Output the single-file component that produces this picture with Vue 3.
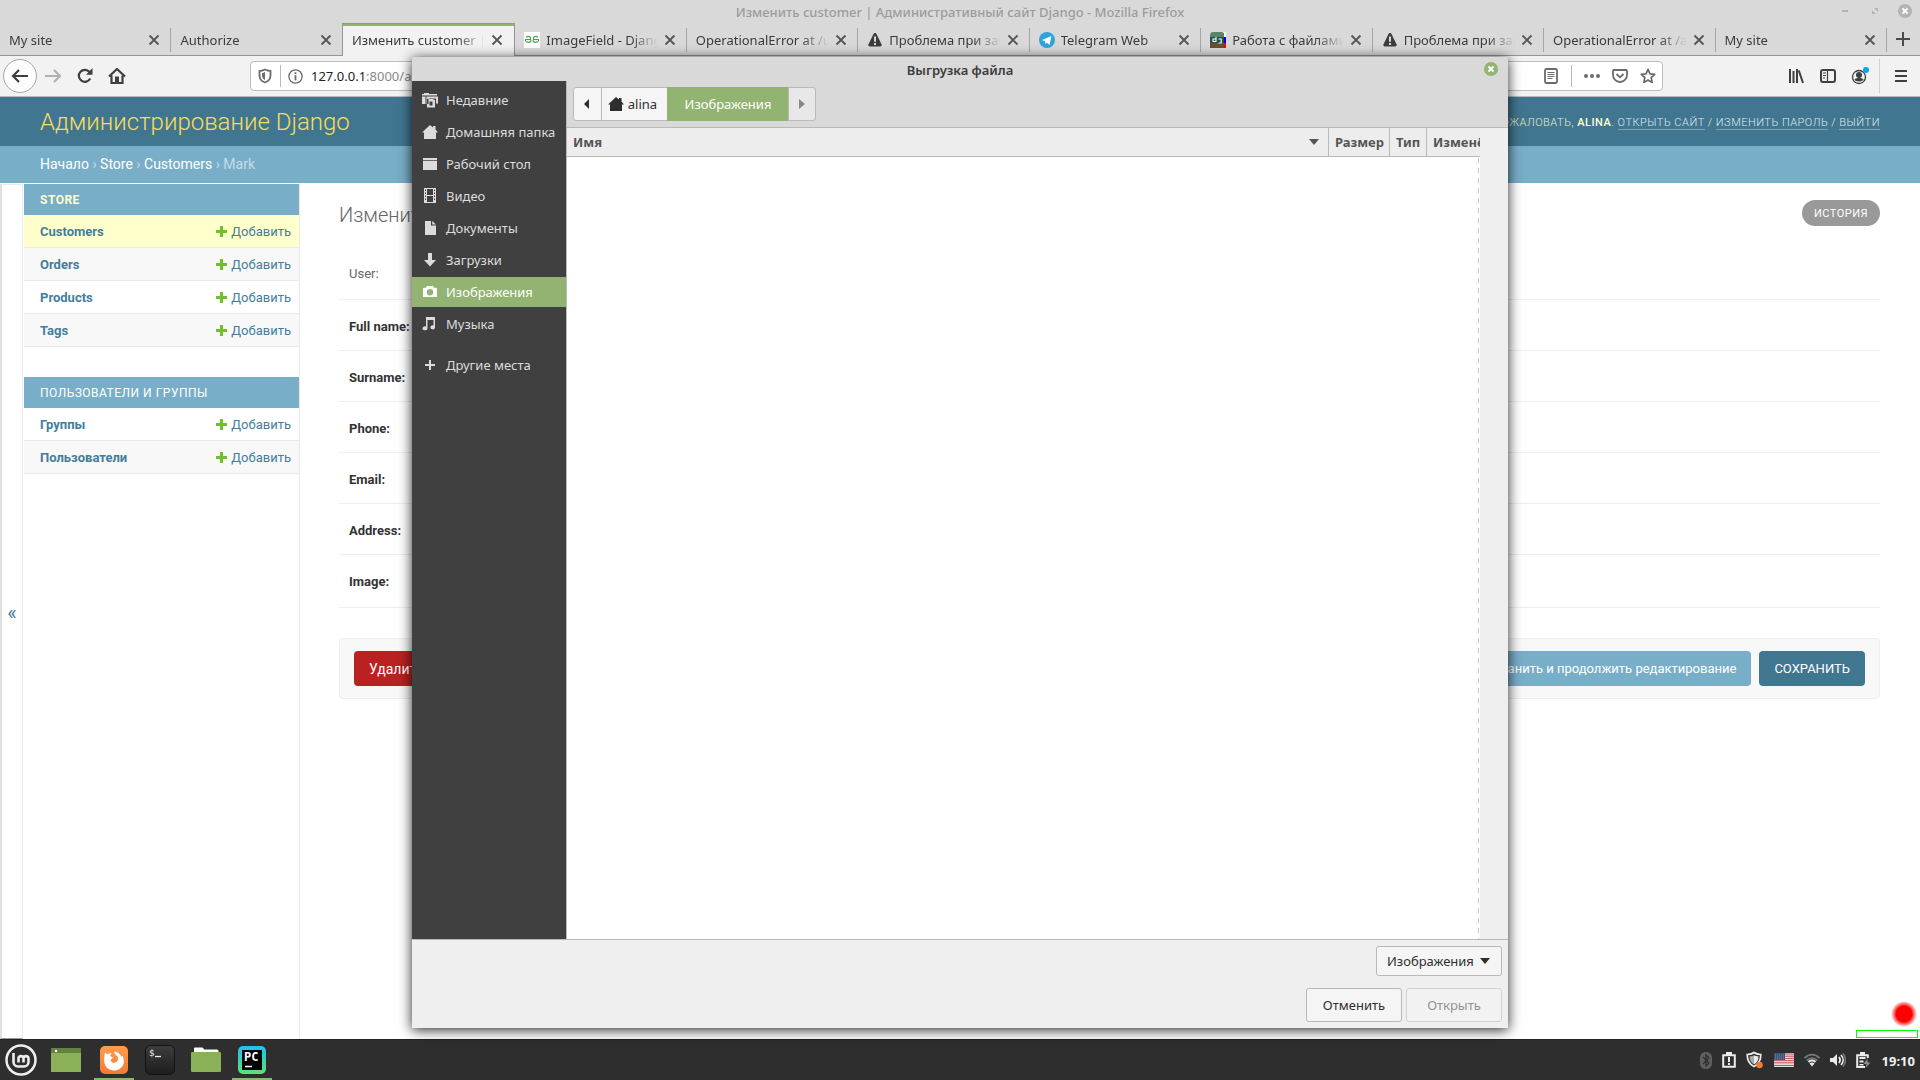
<script setup>
import { ref } from 'vue'

const tabs = [
  { title: 'My site' },
  { title: 'Authorize' },
  { title: 'Изменить customer | Административный сайт', active: true },
  { title: 'ImageField - Django Models', icon: 'geeks' },
  { title: 'OperationalError at /user/' },
  { title: 'Проблема при загрузке', icon: 'warn' },
  { title: 'Telegram Web', icon: 'telegram' },
  { title: 'Работа с файлами', icon: 'dj' },
  { title: 'Проблема при загрузке', icon: 'warn' },
  { title: 'OperationalError at /admin/' },
  { title: 'My site' },
]

const sections = [
  { title: 'STORE', current: true, models: ['Customers', 'Orders', 'Products', 'Tags'] },
  { title: 'Пользователи и группы', models: ['Группы', 'Пользователи'] },
]
const currentModel = 'Customers'

const fields = ['User', 'Full name', 'Surname', 'Phone', 'Email', 'Address', 'Image']

const places = [
  { name: 'Недавние', icon: 'recent' },
  { name: 'Домашняя папка', icon: 'home' },
  { name: 'Рабочий стол', icon: 'desktop' },
  { name: 'Видео', icon: 'video' },
  { name: 'Документы', icon: 'doc' },
  { name: 'Загрузки', icon: 'down' },
  { name: 'Изображения', icon: 'camera' },
  { name: 'Музыка', icon: 'music' },
  { name: 'Другие места', icon: 'plus' },
]
const place = ref('Изображения')
const filter = ref('Изображения')
const url = ref(':8000/admin/store/customer/1/change/')
</script>

<template>
  <div class="screen">
    <header class="titlebar">
      <span>Изменить customer | Административный сайт Django - Mozilla Firefox</span>
      <div class="wm">
        <button aria-label="Свернуть"><svg width="14" height="14"><path d="M4 7h6" stroke="#b4b4b4" stroke-width="2" /></svg></button>
        <button aria-label="Развернуть"><svg width="14" height="14"><path d="M6 4h4v4zM4 6v4h4z" fill="#b4b4b4" /></svg></button>
        <button aria-label="Закрыть"><svg width="14" height="14"><circle cx="7" cy="7" r="7" fill="#b4b4b4" /><path d="M4.500 4.500l5 5m0-5l-5 5" stroke="#fff" stroke-width="2" /></svg></button>
      </div>
    </header>

    <div class="tabs">
      <div v-for="(t, i) in tabs" :key="i" class="tab" :class="{ active: t.active }">
        <svg v-if="t.icon === 'geeks'" class="fav" width="16" height="16"><rect width="16" height="16" fill="#fff" /><path d="M1.800 5.200Q4.500 3.500 6.500 5.500V7.500H1M1.500 7.500v1.200Q3.500 11.500 6.800 9.500V7.500M14.200 5.200Q11.500 3.500 9.500 5.500V7.500H15M14.500 7.500v1.200Q12.500 11.500 9.200 9.500V7.500" fill="none" stroke="#4b9e57" stroke-width="1.100" /></svg>
        <svg v-else-if="t.icon === 'warn'" class="fav" width="16" height="16"><path d="M8 1c.8 0 1.200.5 1.500 1l5 10.300c.5 1.300-.2 2.200-1.300 2.200H2.800c-1.100 0-1.800-.9-1.300-2.200L6.500 2C6.800 1.500 7.200 1 8 1z" fill="#3d3d3d" /><path d="M7 4.500h2v5.200H7zM7 11h2v2H7z" fill="#d9d9d9" /></svg>
        <svg v-else-if="t.icon === 'telegram'" class="fav" width="16" height="16"><circle cx="8" cy="8" r="8" fill="#2fa3dc" /><path d="M3 8l9.500-4-2 9-2.600-2.200-1.400 1.500-.3-2.800z" fill="#fff" /></svg>
        <svg v-else-if="t.icon === 'dj'" class="fav" width="16" height="16"><path fill="#fff" d="M12 0h4v5h-4z" /><path fill="#00f" d="M12 5h4v6h-4z" /><path fill="#f00" d="M12 11h4v5h-4z" /><path fill="#5c8468" d="M2 0h10l2 1v4H0V2z" /><path fill="#24504f" d="M0 5h14v6H0z" /><path fill="#69502e" d="M0 11h14v5H0z" /><path d="M6 5v4.500H3V7H6M8.500 7h2.700v4H8.500" fill="none" stroke="#fff" stroke-width="1.100" /></svg>
        <span class="tab-title">{{ t.title }}</span>
        <button class="tab-x" aria-label="Закрыть вкладку"><svg width="12" height="12"><path d="M1.500 1.500l9 9m0-9l-9 9" stroke="#555" stroke-width="1.800" /></svg></button>
      </div>
      <button class="newtab" aria-label="Новая вкладка"><svg width="14" height="14"><path d="M7 0v14M0 7h14" stroke="#4a4a4a" stroke-width="2" /></svg></button>
    </div>

    <div class="toolbar">
      <button class="back" aria-label="Назад"><svg width="18" height="16"><path d="M17 8H2.500M8 2L2 8l6 6" fill="none" stroke="#3f3f3f" stroke-width="2.200" /></svg></button>
      <button class="tool" aria-label="Вперёд"><svg width="18" height="16"><path d="M1 8h14.500M10 2l6 6-6 6" fill="none" stroke="#b1b1b1" stroke-width="2.200" /></svg></button>
      <button class="tool" aria-label="Обновить"><svg width="16" height="16"><path d="M13.200 10.500A6 6 0 1 1 12.500 4" fill="none" stroke="#3f3f3f" stroke-width="2.200" /><path d="M15.500 0v6.800H9z" fill="#3f3f3f" /></svg></button>
      <button class="tool" aria-label="Домой"><svg width="18" height="16"><path d="M1 8.500L9 1l8 7.500M3.500 7.500V15h11V7.500" fill="none" stroke="#3f3f3f" stroke-width="2.200" /><path d="M7 8.500h4V15H7z" fill="#3f3f3f" /></svg></button>
      <div class="urlbar">
        <svg width="14" height="16"><path d="M7 1.500C5 2.500 3 3 1.500 3v4.500c0 3.500 2.500 6 5.500 7 3-1 5.500-3.500 5.500-7V3C11 3 9 2.500 7 1.500z" fill="none" stroke="#6b6b6b" stroke-width="1.800" /><path d="M7 4v8c-1.800-1-3-2.500-3-4.500V5c1 0 2-.5 3-1z" fill="#6b6b6b" /></svg>
        <i class="vline"></i>
        <svg width="15" height="15"><circle cx="7.500" cy="7.500" r="6.600" fill="none" stroke="#6b6b6b" stroke-width="1.300" /><path d="M6.600 3.300h1.800v1.800H6.600zM6.600 6.200h1.800V11.500H6.600z" fill="#6b6b6b" /></svg>
        <label class="addr"><span>127.0.0.1</span><input v-model="url" aria-label="Адрес" /></label>
        <svg width="14" height="16"><rect x="1" y="1" width="12" height="14" rx="1.500" fill="none" stroke="#6b6b6b" stroke-width="1.800" /><path d="M3.500 4.500h7M3.500 6.500h7M3.500 8.500h7M3.500 10.500h5" stroke="#6b6b6b" /></svg>
        <i class="vline page"></i>
        <svg width="16" height="16"><g fill="#6b6b6b"><circle cx="2" cy="8" r="2" /><circle cx="8" cy="8" r="2" /><circle cx="14" cy="8" r="2" /></g></svg>
        <svg width="16" height="16"><path d="M2 2h12a1 1 0 0 1 1 1v4a7 7 0 0 1-14 0V3a1 1 0 0 1 1-1z" fill="none" stroke="#6b6b6b" stroke-width="1.800" /><path d="M4.500 6L8 9.300 11.500 6" fill="none" stroke="#6b6b6b" stroke-width="1.800" /></svg>
        <svg width="16" height="16"><path d="M8 1.300l2 4.500 4.800.5-3.600 3.200 1 4.900L8 12l-4.200 2.400 1-4.900L1.200 6.300 6 5.800z" fill="none" stroke="#6b6b6b" stroke-width="1.700" stroke-linejoin="round" /></svg>
      </div>
      <div class="tb-right">
        <button aria-label="Библиотека"><svg width="16" height="16"><path d="M2 1v14M5.500 3v12M9 1v14M10.800 2.500L15 15" stroke="#3f3f3f" stroke-width="2" fill="none" /></svg></button>
        <button aria-label="Боковые панели"><svg width="16" height="16"><rect x="1" y="2" width="14" height="12" rx="2" fill="none" stroke="#3f3f3f" stroke-width="2" /><path d="M7.500 2v12M3 5h3M3 7.500h3M3 10h2" stroke="#3f3f3f" stroke-width="1.200" /></svg></button>
        <button aria-label="Аккаунт"><svg width="18" height="20"><circle cx="8" cy="11" r="6.500" fill="none" stroke="#3f3f3f" stroke-width="1.300" /><circle cx="8" cy="9" r="3" fill="#3f3f3f" /><path d="M3.500 13.500c1-2 8-2 9 0-1 2.500-8 2.500-9 0z" fill="#3f3f3f" /><circle cx="15" cy="4" r="3" fill="#00a8f5" /></svg></button>
        <i class="vline tall"></i>
        <button aria-label="Меню"><svg width="14" height="14"><path d="M1 2h12M1 7h12M1 12h12" stroke="#3f3f3f" stroke-width="2" /></svg></button>
      </div>
    </div>

    <div class="admin">
      <div class="ahead">
        <h1><a href="#">Администрирование Django</a></h1>
        <div class="usertools">Добро пожаловать, <strong>alina</strong>. <a href="#">Открыть сайт</a> / <a href="#">Изменить пароль</a> / <a href="#">Выйти</a></div>
      </div>
      <nav class="crumbs"><a href="#">Начало</a> › <a href="#">Store</a> › <a href="#">Customers</a> › Mark</nav>
      <div class="abody">
        <button class="toggle" aria-label="Скрыть навигацию">«</button>
        <nav class="anav">
          <section v-for="s in sections" :key="s.title">
            <h2 :class="{ current: s.current }"><a href="#">{{ s.title }}</a></h2>
            <ul>
              <li v-for="m in s.models" :key="m" :class="{ sel: m === currentModel }">
                <a href="#" class="model">{{ m }}</a>
                <a href="#" class="add"><svg width="11" height="11"><path d="M4 0h3v4h4v3H7v4H4V7H0V4h4z" fill="#70bf2b" /></svg>Добавить</a>
              </li>
            </ul>
          </section>
        </nav>
        <main>
          <div class="mhead"><h2>Изменить customer</h2><a href="#" class="history">История</a></div>
          <div v-for="(f, i) in fields" :key="f" class="frow" :class="{ opt: i === 0, last: i === 6 }"><span>{{ f }}:</span></div>
          <div class="submit">
            <button class="del">Удалить</button>
            <button class="cont">Сохранить и продолжить редактирование</button>
            <button class="save">СОХРАНИТЬ</button>
          </div>
        </main>
      </div>
    </div>

    <footer class="taskbar">
      <button class="app menu" aria-label="Меню"><svg width="32" height="32" fill="none" stroke="#eee"><circle cx="16" cy="16" r="14.500" stroke-width="2.500" /><path d="M8.500 9v9a4.500 4.500 0 0 0 4.500 4.500h6a4.500 4.500 0 0 0 4.500-4.500v-4a2.600 2.600 0 0 0-5 0v4.500m0-4.500a2.600 2.600 0 0 0-5 0v4.500" stroke-width="2.600" /></svg></button>
      <button class="app desk" aria-label="Рабочий стол"><svg width="30" height="24"><rect width="30" height="24" fill="#8bb158" /><rect width="30" height="5" fill="#64823f" /><circle cx="5" cy="3" r="1.300" fill="#fff" /></svg></button>
      <button class="app run" aria-label="Firefox"><svg width="28" height="28"><defs><linearGradient id="ff" x2="0" y2="1"><stop stop-color="#fd9e50" /><stop offset="1" stop-color="#f57a33" /></linearGradient></defs><rect width="28" height="28" rx="5" fill="url(#ff)" /><path d="M5 6.500L7.500 8.500C8.500 7.500 10 7 11.500 7L10 10l3 1.500C12.500 13 10.200 13 10.800 15 12.500 18 17 17 18 13.500 18.500 11 17 9.500 15 8.500c0-1.500-.5-2-1-3 4 .5 6.500 2.500 7.500 5.500l.8-1.500c1.500 2.500 2 5.500 1.200 8.500-1.500 4-5 6.500-9.500 6.500C8.500 24.500 4.500 20.500 4.200 15.500 4 12 4.500 9 5 6.500z" fill="#fff" /></svg></button>
      <button class="app" aria-label="Терминал"><svg width="30" height="30"><defs><linearGradient id="tm" x2="0" y2="1"><stop stop-color="#3e3e3e" /><stop offset="1" stop-color="#1c1c1c" /></linearGradient></defs><rect x=".5" y=".5" width="29" height="29" rx="5" fill="url(#tm)" stroke="#131313" /><path d="M10 11.500h6" stroke="#eee" stroke-width="1.300" /><text x="4" y="11" fill="#eee" font-family="DejaVu Sans Mono, monospace" font-size="9">$</text></svg></button>
      <button class="app" aria-label="Файлы"><svg width="30" height="26"><path d="M3 3V1.500Q3 .5 4 .5h7q1 0 1.500 1l.5 1h13q1.500 0 1.500 1.500v3H3z" fill="#fff" /><rect y="5" width="30" height="20" rx="1" fill="#8bb158" /></svg></button>
      <button class="app run" aria-label="PyCharm"><svg width="28" height="28"><defs><linearGradient id="pc" x2="0" y2="1"><stop stop-color="#1fc0f3" /><stop offset="1" stop-color="#5de36e" /></linearGradient></defs><rect width="28" height="28" rx="5" fill="url(#pc)" /><rect x="4" y="4" width="20" height="20" fill="#000" /><path d="M7 20.500h7" stroke="#fff" stroke-width="1.500" /><text x="6" y="15" fill="#fff" font-family="DejaVu Sans Mono, monospace" font-weight="bold" font-size="12">PC</text></svg></button>
      <div class="tray">
        <svg width="12" height="17"><rect width="12" height="17" rx="5.500" fill="#5f5f5f" /><path d="M3 5l6 6-3 3V3l3 3-6 6" fill="none" stroke="#2e2e2e" stroke-width="1.200" /></svg>
        <svg width="14" height="16"><path d="M1.200 3.200h11.600v11.600H1.200z" fill="none" stroke="#ececec" stroke-width="2" /><path d="M4 0h6v3H4zM6 5h2v5H6zM6 11h2v2H6z" fill="#ececec" /></svg>
        <svg width="18" height="18"><path d="M8 1.500C6 3 4 3.500 1.200 3.500c0 5 1.300 9.500 6.800 12 5.500-2.500 6.800-7 6.800-12C12 3.500 10 3 8 1.500z" fill="none" stroke="#ececec" stroke-width="1.700" /><path d="M8 4v9.500C5 12 3.500 9 3.500 5.500 5.500 5.300 7 5 8 4z" fill="#aaa" /><path d="M8 4v9.500c3-1.500 4.500-4.500 4.500-8C10.500 5.300 9 5 8 4z" fill="#ececec" /><circle cx="13.500" cy="14" r="3.300" fill="#f5793a" /></svg>
        <svg width="20" height="14"><rect width="20" height="14" fill="#ddd" /><path d="M0 1h20M0 3.200h20M0 5.400h20M0 7.600h20M0 9.800h20M0 12.500h20" stroke="#c75361" /><rect width="11" height="7" fill="#3e5280" /><path d="M1 2h9M1 4h9M1 6h9" stroke="#8391b0" stroke-dasharray="1 1" stroke-width=".8" /></svg>
        <svg width="16" height="14" fill="none"><path d="M.5 5c4.500-4.500 10.500-4.500 15 0M2.800 7.500c3-3 7.400-3 10.400 0" stroke="#777" stroke-width="1.800" /><path d="M4.500 9c2-2 5-2 7 0" stroke="#ececec" stroke-width="1.800" /><path d="M5.500 10.500c1.500-1.200 3.500-1.200 5 0L8 13.500z" fill="#ececec" /></svg>
        <svg width="16" height="14" fill="none"><path d="M0 5h3l4-4v12L3 9H0z" fill="#ececec" /><path d="M9 4c1.500 2 1.500 4 0 6M11 2c2.800 3 2.800 7 0 10" stroke="#ececec" stroke-width="1.700" /><path d="M13 .5c3 4 3 9 0 13" stroke="#777" stroke-width="1.500" /></svg>
        <svg width="15" height="16"><path d="M9 15H1.200V3.200h10.600V6" fill="none" stroke="#ececec" stroke-width="2" /><path d="M4 0h5v3H4zM3.500 5h6v2h-6zM3.500 8.500h4v2h-4zM3.500 12h4v1.500h-4z" fill="#ececec" /><path d="M11.500 6.500L7.500 12h3l-1 4 5-5.500h-3z" fill="#8f8f8f" /></svg>
        <time>19:10</time>
      </div>
    </footer>

    <div class="dialog" role="dialog" aria-label="Выгрузка файла">
      <div class="dtitle">
        <span>Выгрузка файла</span>
        <button aria-label="Закрыть"><svg width="14" height="14"><circle cx="7" cy="7" r="7" fill="#92b372" /><path d="M4.500 4.500l5 5m0-5l-5 5" stroke="#fff" stroke-width="2" /></svg></button>
      </div>
      <div class="dbody">
        <aside>
          <button v-for="p in places" :key="p.name" class="place" :class="{ on: p.name === place, sep: p.icon === 'plus' }" @click="place = p.name">
            <svg width="16" height="16" fill="currentColor">
              <path v-if="p.icon === 'recent'" d="M0 2h2V1h5v1h8v1.500H0zM0 4.500h3.500V12H0zM4.500 4.500H16v7h-2V6.500H6.500V12h-2zM7 7h3.500L13 8v7.500H5V7zM7.500 9.500v4h3v-4z" fill-rule="evenodd" />
              <path v-else-if="p.icon === 'home'" d="M8 1l3 2.500V2h2.500v3.500L16 8.500h-2V15H2V8.500H0z" />
              <path v-else-if="p.icon === 'desktop'" d="M1 2h14v2H1zM1 4.700h14V14H1z" />
              <path v-else-if="p.icon === 'video'" fill-rule="evenodd" d="M2 0h12v15H2zM3 1.500V3h1V1.500zM3 4.500V6h1V4.500zM3 7.500V9h1V7.500zM3 10.500V12h1v-1.500zM12 1.500V3h1V1.500zM12 4.500V6h1V4.500zM12 7.500V9h1V7.500zM12 10.500V12h1v-1.500zM5 1v6h6V1zM5 8v6h6V8z" />
              <path v-else-if="p.icon === 'doc'" d="M3 1h6v4.500h5V15H3zM10.200 1L14 4.500h-3.800z" />
              <path v-else-if="p.icon === 'down'" d="M6 1h4v7h4l-6 6.500L2 8h4z" />
              <path v-else-if="p.icon === 'camera'" fill-rule="evenodd" d="M5 2h6l1 1.700h2q1 0 1 1V13H1V4.700q0-1 1-1h2zM8 5a3.200 3.200 0 1 0 0 6.400A3.200 3.200 0 0 0 8 5z" />
              <path v-else-if="p.icon === 'music'" d="M4 1h9v10.500a2.300 2 0 1 1-1.500-2V4H5.500v8.500a2.500 2 0 1 1-1.500-2z" />
              <path v-else d="M7 3h2v4h4v2H9v4H7V9H3V7h4z" />
            </svg>{{ p.name }}
          </button>
        </aside>
        <div class="dmain">
          <div class="path">
            <button class="parrow" aria-label="Влево"><svg width="5" height="10"><path d="M5 0v10L0 5z" fill="#2e2e2e" /></svg></button>
            <button class="pdir"><svg width="16" height="14"><path d="M8 0l3 2.500V1h2.500v3.500L16 7.500h-2V14H2V7.500H0z" fill="#2e2e2e" /></svg>alina</button>
            <button class="pcur">Изображения</button>
            <button class="parrow dis" aria-label="Вправо"><svg width="6" height="10"><path d="M0 0v10l6-5z" fill="#888" /></svg></button>
          </div>
          <div class="listwrap">
            <div class="list">
              <table>
                <thead>
                  <tr>
                    <th><span class="thname">Имя <svg width="10" height="6"><path d="M0 0h10L5 6z" fill="#555" /></svg></span></th>
                    <th class="c2">Размер</th>
                    <th class="c3">Тип</th>
                    <th class="c4">Изменён</th>
                  </tr>
                </thead>
              </table>
            </div>
          </div>
        </div>
      </div>
      <div class="dfoot">
        <label class="filter">
          <select v-model="filter" aria-label="Тип файлов"><option>Изображения</option></select>
          <svg width="10" height="6"><path d="M0 0h10L5 6z" fill="#2e2e2e" /></svg>
        </label>
        <div class="dbtns"><button>Отменить</button><button disabled>Открыть</button></div>
      </div>
    </div>

    <i class="recdot"></i>
    <i class="recbox"></i>
  </div>
</template>

<style>
body { margin: 0; }
</style>

<style scoped>
* { box-sizing: border-box; }
button { border: 0; padding: 0; background: none; font: inherit; color: inherit; display: flex; align-items: center; justify-content: center; }
a { text-decoration: none; color: inherit; }
svg { flex: none; display: block; }
h1, h2, ul { margin: 0; padding: 0; font-weight: inherit; list-style: none; }
.screen { position: relative; height: 100vh; display: flex; flex-direction: column; overflow: hidden; background: #fff; font: 13px "Noto Sans", sans-serif; color: #3b3b3b; }

.titlebar { flex: none; height: 23px; background: #d9d9d9; display: flex; align-items: center; justify-content: center; color: #9c9c9c; font-weight: 500; position: relative; }
.wm { position: absolute; right: 8px; top: 4px; display: flex; gap: 16px; }
.tabs { flex: none; height: 33px; display: flex; background: #d9d9d9; border-bottom: 1px solid #969696; }
.tab { flex: 1 1 0; min-width: 0; display: flex; align-items: center; padding: 1px 11px 0 9px; position: relative; }
.tab::after { content: ""; position: absolute; right: 0; top: 5px; height: 24px; width: 1px; background: #a5a5a5; }
.tab.active { background: #f2f2f2; border: 1px solid #969696; border-bottom: 0; box-shadow: inset 0 2px #92b372; margin: 0 0 -1px -1px; padding-bottom: 1px; }
.tab.active::after { display: none; }
.fav { margin-right: 6px; }
.tab-title { flex: 1; min-width: 0; overflow: hidden; white-space: nowrap; mask-image: linear-gradient(to left, transparent, #000 28px); }
.tab-x { width: 12px; height: 12px; margin-left: 6px; }
.newtab { width: 33px; }

.toolbar { flex: none; height: 41px; background: #f2f2f2; border-bottom: 1px solid #bababa; display: flex; align-items: center; padding: 0 3px; }
.back { width: 34px; height: 34px; border: 1px solid #a8a8a8; border-radius: 50%; background: #fcfcfc; }
.tool { width: 32px; height: 32px; }
.urlbar { margin-left: 117px; width: 1413px; flex: 0 1 1413px; height: 30px; border: 1px solid #bdbdbd; border-radius: 4px; background: #fff; display: flex; align-items: center; padding: 0 6px 0 7px; gap: 12px; }
.vline { width: 1px; height: 22px; background: #b9b9b9; margin: 0 -5px 0 -4px; }
.vline.page { margin: 0 0 0 1px; }
.vline.tall { height: 34px; background: #d0d0d0; margin: 0 -2px 0 -4px; }
.addr { flex: 1; display: flex; color: #222; margin-left: -4px; }
.addr input { flex: 1; border: 0; padding: 0; outline: 0; font: inherit; color: #8a8a8a; background: none; }
.tb-right { margin-left: auto; display: flex; align-items: center; gap: 14px; padding-right: 7px; }
.tb-right button { min-width: 18px; }

.admin { flex: 1; min-height: 0; display: flex; flex-direction: column; font-family: Roboto, sans-serif; color: #333; }
.ahead { flex: none; height: 49px; background: #417690; padding: 0 40px; display: flex; align-items: center; justify-content: space-between; color: #ffc; }
.ahead h1 { font-size: 24px; font-weight: 300; color: #f5dd5d; }
.usertools { padding-top: 2px; font-size: 11px; font-weight: 300; letter-spacing: .5px; text-transform: uppercase; color: #e6ecc8; }
.usertools strong { color: #ffc; font-weight: 500; }
.usertools a { color: #dfe9ee; border-bottom: 1px solid #7fa3b4; }
.crumbs { flex: none; height: 37px; line-height: 36px; background: #79aec8; padding: 0 40px; font-size: 14px; color: #c4dce8; }
.crumbs a { color: #fff; }
.abody { flex: 1; min-height: 0; display: flex; font-size: 13px; }
.toggle { flex: none; width: 23px; margin-top: 1px; border: 1px solid #eaeaea; border-left: 2px solid #e0e0e0; border-bottom: 1px solid #999; color: #417690; font-size: 20px; padding-top: 2px; }
.anav { flex: none; width: 277px; padding: 1px 0 0 1px; border-right: 1px solid #eaeaea; }
.anav section { margin-bottom: 30px; }
.anav h2 { height: 31px; line-height: 32px; padding: 0 16px; background: #79aec8; color: #fff; font-size: 12px; letter-spacing: .5px; text-transform: uppercase; }
.anav h2.current { color: #ffc; font-weight: 700; }
.anav li { height: 33px; border-bottom: 1px solid #eaeaea; padding: 0 8px 0 16px; display: flex; align-items: center; justify-content: space-between; color: #447e9b; }
.anav li:nth-child(even) { background: #f8f8f8; }
.anav li.sel { background: #ffc; }
.model { font-weight: 700; }
.add { display: flex; align-items: center; gap: 4px; }
main { flex: 1; min-width: 0; padding: 17px 40px 0 39px; }
.mhead { height: 48px; display: flex; align-items: flex-start; justify-content: space-between; }
.mhead h2 { font-size: 20px; line-height: 30px; font-weight: 300; color: #666; }
.history { height: 26px; line-height: 27px; border-radius: 13px; background: #999; color: #fff; font-size: 11px; letter-spacing: .5px; text-transform: uppercase; padding: 0 12px; }
.frow { height: 51px; border-bottom: 1px solid #eee; display: flex; align-items: center; padding: 2px 10px 0; font-weight: 700; }
.frow.opt { height: 52px; padding-top: 0; font-weight: 400; color: #666; }
.frow.last { height: 53px; padding-top: 0; }
.submit { margin-top: 30px; height: 61px; border: 1px solid #eee; border-radius: 4px; background: #f8f8f8; display: flex; align-items: center; gap: 8px; padding: 0 14px; }
.submit button { height: 35px; padding: 0 15px; border-radius: 4px; color: #fff; }
.submit .del { background: #ba2121; font-size: 14px; margin-right: auto; }
.submit .cont { background: #79aec8; }
.submit .save { background: #417690; }

.taskbar { flex: none; height: 41px; background: #2e2e2e; display: flex; align-items: center; gap: 6px; padding: 0 5px 0 1px; border-top: 1px solid #222; }
.app { width: 40px; height: 40px; border: solid transparent; border-width: 2px 0; }
.menu { margin-right: -1px; }
.desk { margin-right: 2px; }
.run { border-bottom-color: #92b372; }
.tray { margin-left: auto; display: flex; align-items: center; gap: 10px; color: #f0f0f0; font-weight: 700; }
.tray time { padding: 2px 0 0 1px; }

.dialog { position: absolute; left: 412px; right: 412px; top: 57px; bottom: 52px; background: #efefef; display: flex; flex-direction: column; box-shadow: 0 2px 12px rgba(0, 0, 0, .85), 0 -1px #eee; }
.dtitle { flex: none; height: 24px; background: #d9d9d9; display: flex; align-items: center; justify-content: center; position: relative; font-weight: 600; padding-top: 2px; }
.dtitle button { position: absolute; right: 10px; top: 5px; }
.dbody { flex: 1; min-height: 0; display: flex; border-bottom: 1px solid #b9b9b9; }
aside { flex: none; width: 155px; background: #404040; border-right: 1px solid #b9b9b9; padding-top: 4px; display: flex; flex-direction: column; gap: 2px; }
.place { height: 30px; justify-content: flex-start; gap: 8px; padding-left: 10px; color: #dcdcdc; white-space: nowrap; }
.place.on { background: #92b372; color: #fff; }
.place.sep { margin-top: 9px; }
.dmain { flex: 1; min-width: 0; display: flex; flex-direction: column; }
.path { flex: none; height: 47px; background: #d9d9d9; border-bottom: 1px solid #b9b9b9; display: flex; align-items: center; padding-left: 6px; }
.path button { height: 34px; border: 1px solid #b9b9b9; background: #f5f5f5; margin-right: -1px; }
.path .parrow { width: 29px; padding-right: 2px; border-radius: 3px 0 0 3px; }
.path .pdir { width: 67px; padding-right: 4px; gap: 4px; color: #2e2e2e; }
.path .pcur { width: 122px; background: #92b372; border-color: #92b372; color: #fff; }
.path .dis { width: 28px; padding: 0; background: #e8e8e8; border-radius: 0 3px 3px 0; }
.listwrap { flex: 1; display: flex; padding-right: 28px; background: #efefef; min-height: 0; }
.list { flex: 1; min-width: 0; overflow: hidden; background: repeating-linear-gradient(#c4c4c4 0 5px, #fff 5px 10px) right 1px top 0 / 1px 100% no-repeat #fff; }
table { width: 100%; table-layout: fixed; border-collapse: separate; border-spacing: 0; }
th { height: 29px; padding: 0 0 0 6px; text-align: left; background: #ededed; color: #555; border-bottom: 1px solid #b9b9b9; border-left: 1px solid #b9b9b9; overflow: hidden; white-space: nowrap; }
th:first-child { border-left: 0; }
.thname { display: flex; align-items: center; justify-content: space-between; padding-right: 9px; }
.c2 { width: 61px; }
.c3 { width: 37px; }
.c4 { width: 54px; }
.dfoot { flex: none; height: 88px; padding: 6px 6px 0; display: flex; flex-direction: column; align-items: flex-end; gap: 12px; }
.filter { position: relative; width: 126px; height: 30px; }
select { appearance: none; width: 100%; height: 100%; border: 1px solid #b9b9b9; border-radius: 3px; background: #f5f5f5; padding: 0 0 0 10px; font: inherit; color: #2e2e2e; }
.filter svg { position: absolute; right: 12px; top: 12px; }
.dbtns { display: flex; gap: 4px; }
.dbtns button { width: 96px; height: 34px; border: 1px solid #b9b9b9; border-radius: 3px; background: #f5f5f5; color: #2e2e2e; }
.dbtns button:disabled { color: #929292; border-color: #d2d2d2; background: #f2f2f2; }

.recdot { position: absolute; right: 3px; bottom: 53px; width: 26px; height: 26px; border-radius: 50%; background: radial-gradient(circle closest-side, red 60%, rgba(255, 0, 0, 0)); }
.recbox { position: absolute; right: 2px; bottom: 42px; width: 62px; height: 8px; border: 1px solid #0f0; }
</style>
